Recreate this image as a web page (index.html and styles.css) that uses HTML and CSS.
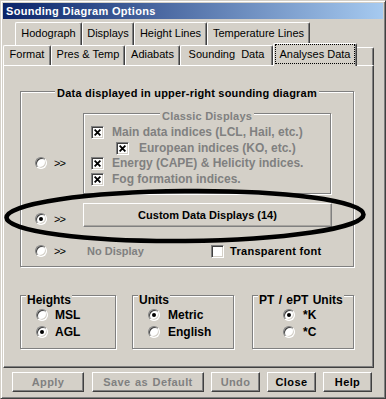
FILE: index.html
```html
<!DOCTYPE html>
<html>
<head>
<meta charset="utf-8">
<link rel="stylesheet" href="styles.css">
</head>
<body>
<div class="window">
  <div class="titlebar">Sounding Diagram Options</div>
  <div class="tabs">
    <div class="tabrow back">
      <div class="tab w-hodo">Hodograph</div>
      <div class="tab w-disp">Displays</div>
      <div class="tab w-height">Height Lines</div>
      <div class="tab w-temp">Temperature Lines</div>
    </div>
    <div class="tabrow front">
      <div class="tab w-format">Format</div>
      <div class="tab w-pres">Pres &amp; Temp</div>
      <div class="tab w-adia">Adiabats</div>
      <div class="tab w-sound">Sounding&nbsp; Data</div>
      <div class="tab selected w-anal"><div class="focus">Analyses Data</div></div>
      <div class="tab stub"></div>
    </div>
  </div>
  <div class="panel">
    <div class="group main">
      <div class="gtitle center">Data displayed in upper-right sounding diagram</div>
      <div class="choices">
        <span class="radio r-top"></span><span class="arrows r-top">&gt;&gt;</span>
        <div class="group classic">
          <div class="gtitle center gray">Classic Displays</div>
          <div class="cbrow"><span class="cb"><svg width="7" height="7" viewBox="0 0 7 7"><path d="M0.6 0.6L6.4 6.4M6.4 0.6L0.6 6.4"/></svg></span><span class="gray">Main data indices (LCL, Hail, etc.)</span></div>
          <div class="cbrow indent"><span class="cb"><svg width="7" height="7" viewBox="0 0 7 7"><path d="M0.6 0.6L6.4 6.4M6.4 0.6L0.6 6.4"/></svg></span><span class="gray">European indices (KO, etc.)</span></div>
          <div class="cbrow short"><span class="cb"><svg width="7" height="7" viewBox="0 0 7 7"><path d="M0.6 0.6L6.4 6.4M6.4 0.6L0.6 6.4"/></svg></span><span class="gray">Energy (CAPE) &amp; Helicity indices.</span></div>
          <div class="cbrow"><span class="cb"><svg width="7" height="7" viewBox="0 0 7 7"><path d="M0.6 0.6L6.4 6.4M6.4 0.6L0.6 6.4"/></svg></span><span class="gray">Fog formation indices.</span></div>
        </div>

        <span class="radio checked r-mid"></span><span class="arrows r-mid">&gt;&gt;</span>
        <div class="btn custom">Custom Data Displays (14)</div>

        <span class="radio r-low"></span><span class="arrows r-low">&gt;&gt;</span>
        <div class="lowrow">
          <span class="gray nodisp">No Display</span>
          <span class="cb"></span>
          <span class="tf">Transparent font</span>
        </div>
      </div>
    </div>

    <div class="bottomgroups">
      <div class="group small heights">
        <div class="gtitle left">Heights</div>
        <div class="rrow"><span class="radio"></span><span>MSL</span></div>
        <div class="rrow"><span class="radio checked"></span><span>AGL</span></div>
      </div>
      <div class="group small units">
        <div class="gtitle left">Units</div>
        <div class="rrow"><span class="radio checked"></span><span>Metric</span></div>
        <div class="rrow"><span class="radio"></span><span>English</span></div>
      </div>
      <div class="group small pt">
        <div class="gtitle left">PT / ePT Units</div>
        <div class="rrow"><span class="radio checked"></span><span>*K</span></div>
        <div class="rrow"><span class="radio"></span><span>*C</span></div>
      </div>
    </div>
  </div>
  <div class="buttons">
    <div class="btn push disabled b-apply">Apply</div>
    <div class="btn push disabled b-save">Save as Default</div>
    <div class="btn push disabled b-undo">Undo</div>
    <div class="btn push b-close">Close</div>
    <div class="btn push b-help">Help</div>
  </div>
</div>
<svg class="annot" width="386" height="399" viewBox="0 0 386 399">
  <ellipse cx="185" cy="216" rx="178.5" ry="25" transform="rotate(-0.5 185 216)" fill="none" stroke="#000" stroke-width="4.6"/>
</svg>
</body>
</html>
```

FILE: styles.css
```css
* { box-sizing: border-box; }
html, body { margin: 0; padding: 0; }
body {
  position: relative;
  width: 386px;
  height: 399px;
  overflow: hidden;
  background: #D4D0C8;
  font-family: "Liberation Sans", Arial, sans-serif;
  font-size: 11px;
  line-height: 13px;
  color: #000;
}
.window {
  width: 386px;
  height: 399px;
  border: 1px solid;
  border-color: #D4D0C8 #404040 #404040 #D4D0C8;
  box-shadow: inset 1px 1px 0 #fff, inset -1px -1px 0 #808080;
  padding: 2px 2px 0 2px;
  display: flex;
  flex-direction: column;
}
.titlebar {
  height: 16px;
  line-height: 16px;
  padding-left: 3px;
  color: #fff;
  font-weight: bold;
  letter-spacing: 0.3px;
  background: linear-gradient(to right, #0A246A, #A6CAF0);
}

/* tabs */
.tabs { height: 46px; display: flex; flex-direction: column; }
.tabrow { display: flex; }
.tabrow.back { margin-top: 3px; height: 23px; padding-left: 12px; }
.tabrow.front { height: 20px; align-items: flex-end; }
.tab {
  height: 100%;
  border: 1px solid;
  border-bottom: none;
  border-color: #fff #404040 transparent #fff;
  border-radius: 2px 2px 0 0;
  box-shadow: inset -1px 0 0 #808080;
  text-align: center;
  white-space: nowrap;
}
.back .tab { padding-top: 4px; }
.front .tab { padding-top: 2px; }
.w-hodo { width: 67px; }
.w-disp { width: 52px; }
.w-height { width: 73px; }
.w-temp { width: 103px; }
.w-format { width: 48px; }
.w-pres { width: 74px; }
.w-adia { width: 55px; }
.w-sound { width: 93px; }
.w-anal { width: 84px; }
.tab.selected {
  position: relative;
  z-index: 1;
  height: 23px;
  margin-bottom: -1px;
  padding-top: 0;
  background: #D4D0C8;
}
.focus {
  margin: 0 1px;
  height: 20px;
  border: 1px dotted #000;
  padding-top: 3px;
}
.tab.stub { width: 17px; height: 18px; padding: 0; border-left: none; border-radius: 0 2px 0 0; }

/* panel */
.panel {
  width: 371px;
  height: 303px;
  border: 1px solid;
  border-color: #fff #404040 #404040 #fff;
  box-shadow: inset -1px -1px 0 #808080;
  padding: 25px 0 0 16px;
  display: flex;
  flex-direction: column;
}
.group {
  border: 1px solid #808080;
  box-shadow: 1px 1px 0 #fff, inset 1px 1px 0 #fff;
  display: flex;
  flex-direction: column;
}
.gtitle {
  height: 13px;
  font-weight: bold;
  background: #D4D0C8;
  white-space: nowrap;
}
.gtitle.center { align-self: center; padding: 0 2px; letter-spacing: 0.2px; }
.gtitle.left {
  align-self: flex-start;
  padding: 0 1px;
  margin-left: 5px;
  margin-top: -2px;
  font-size: 12px;
  word-spacing: 1px;
}
.gray { color: #808080; font-weight: bold; }

.group.main { width: 334px; padding-bottom: 8px; }
.main > .gtitle { margin-top: -5px; }
.choices {
  display: grid;
  grid-template-columns: 12px 36px 249px;
  padding-left: 14px;
  margin-top: 13px;
}
.radio {
  display: block;
  flex: none;
  width: 12px;
  height: 12px;
  border-radius: 50%;
  background: #fff;
  border: 1px solid;
  border-color: #808080 #fff #fff #808080;
  box-shadow: inset 1px 1px 0 #404040, inset -1px -1px 0 #D4D0C8;
  position: relative;
}
.radio.checked::after {
  content: "";
  position: absolute;
  left: 3px;
  top: 3px;
  width: 4px;
  height: 4px;
  border-radius: 50%;
  background: #000;
}
.arrows {
  height: 12px;
  line-height: 12px;
  padding-left: 7px;
  letter-spacing: -1px;
}
.r-top { align-self: end; margin-bottom: 25px; }
.r-mid { align-self: end; margin-bottom: 2px; }
.r-low { align-self: end; margin-bottom: 1px; }

.group.classic { width: 248px; padding-bottom: 6px; }
.classic > .gtitle { margin-top: -4px; margin-bottom: 1px; }
.cbrow {
  display: flex;
  align-items: center;
  height: 16px;
  padding-left: 7px;
  gap: 8px;
  white-space: nowrap;
  font-size: 12px;
}
.cbrow.indent { padding-left: 32px; gap: 10px; }
.cbrow.short { height: 15px; }
.cb {
  flex: none;
  width: 13px;
  height: 13px;
  background: #fff;
  border: 1px solid;
  border-color: #808080 #fff #fff #808080;
  box-shadow: inset 1px 1px 0 #404040, inset -1px -1px 0 #D4D0C8;
  display: flex;
  align-items: center;
  justify-content: center;
}
.cb svg path { stroke: #000; stroke-width: 1.8; fill: none; }

.btn {
  display: flex;
  align-items: center;
  justify-content: center;
  font-weight: bold;
  white-space: nowrap;
}
.btn.custom {
  margin-top: 9px;
  height: 24px;
  border: 1px solid;
  border-color: #fff #808080 #808080 #fff;
  box-shadow: inset -1px -1px 0 #A8A5A0;
}
.lowrow {
  margin-top: 18px;
  height: 13px;
  display: flex;
  align-items: center;
  padding-left: 4px;
}
.nodisp { width: 124px; }
.tf { margin-left: 6px; font-weight: bold; letter-spacing: 0.3px; }

/* bottom groups */
.bottomgroups { display: flex; margin-top: 28px; }
.group.small { height: 54px; padding-bottom: 8px; }
.heights { width: 96px; }
.units { width: 102px; margin-left: 16px; }
.pt { width: 102px; margin-left: 18px; }
.rrow {
  display: flex;
  align-items: center;
  height: 16px;
  gap: 7px;
  padding-left: 15px;
  font-weight: bold;
  font-size: 12px;
}
.rrow + .rrow { margin-top: 1px; }
.units .rrow { gap: 8px; }
.pt .rrow { padding-left: 30px; gap: 8px; }

/* buttons */
.buttons { display: flex; margin-top: 4px; padding-left: 9px; }
.btn.push {
  height: 20px;
  border: 1px solid;
  border-color: #fff #404040 #404040 #fff;
  box-shadow: inset -1px -1px 0 #808080;
  margin-left: 7px;
  letter-spacing: 0.4px;
  word-spacing: 1px;
}
.btn.disabled { color: #808080; }
.b-apply { width: 72px; margin-left: 0 !important; }
.b-save { width: 112px; margin-left: 8px !important; }
.b-undo { width: 49px; }
.b-close { width: 49px; }
.b-help { width: 49px; }

.annot { position: absolute; left: 0; top: 0; pointer-events: none; }
```
